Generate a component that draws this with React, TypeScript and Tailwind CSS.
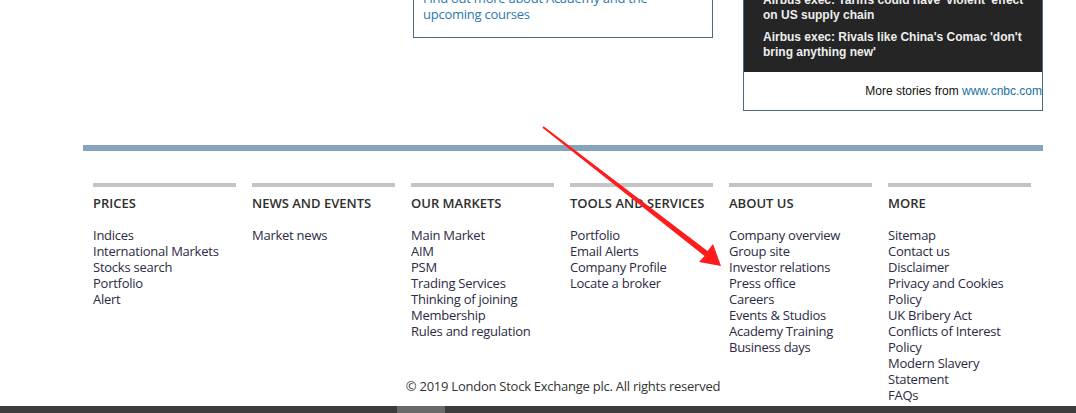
import React from "react";

const columns: { title: string; links: string[] }[] = [
  { title: "PRICES", links: ["Indices", "International Markets", "Stocks search", "Portfolio", "Alert"] },
  { title: "NEWS AND EVENTS", links: ["Market news"] },
  {
    title: "OUR MARKETS",
    links: ["Main Market", "AIM", "PSM", "Trading Services", "Thinking of joining", "Membership", "Rules and regulation"],
  },
  { title: "TOOLS AND SERVICES", links: ["Portfolio", "Email Alerts", "Company Profile", "Locate a broker"] },
  {
    title: "ABOUT US",
    links: [
      "Company overview",
      "Group site",
      "Investor relations",
      "Press office",
      "Careers",
      "Events & Studios",
      "Academy Training",
      "Business days",
    ],
  },
  {
    title: "MORE",
    links: [
      "Sitemap",
      "Contact us",
      "Disclaimer",
      "Privacy and Cookies Policy",
      "UK Bribery Act",
      "Conflicts of Interest Policy",
      "Modern Slavery Statement",
      "FAQs",
    ],
  },
];

export default function App() {
  return (
    <div className="relative w-[1076px] h-[413px] overflow-hidden bg-white flex flex-col">
      <div className="w-[960px] ml-[83px] flex flex-col">
        {/* top row */}
        <div className="mt-[-10px] flex items-start gap-[30px]">
          <div className="w-[300px]" />
          <div className="w-[300px] border border-t-0 border-[#4b6a88] pl-[9px] pb-[15px] text-[13px] leading-[16px] tracking-[-0.25px] text-[#2a77ad] font-['Open_Sans',sans-serif]">
            <div>Find out more about Academy and the</div>
            <div>upcoming courses</div>
          </div>
          <div className="w-[300px] border border-t-0 border-[#4b6a88] font-['Liberation_Sans',Arial,sans-serif]">
            <div className="bg-[#252525] pt-[3px] pl-[19px] pr-[6px] pb-[12px] text-[12px] leading-[15px] font-bold text-[#eeeeee]">
              <div>Airbus exec: Tariffs could have 'violent' effect on US supply chain</div>
              <div className="mt-[7px]">Airbus exec: Rivals like China's Comac 'don't bring anything new'</div>
            </div>
            <div className="h-[38px] flex items-center justify-end text-[12px] text-[#111]">
              <span>
                More stories from <span className="text-[#1a6fa3]">www.cnbc.com</span>
              </span>
            </div>
          </div>
        </div>

        {/* blue rule */}
        <div className="mt-[34px] h-[6px] bg-[#86a4be]" />

        {/* columns */}
        <div className="mt-[32px] pl-[10px] grid grid-cols-[repeat(6,143px)] gap-x-[16px] font-['Open_Sans',sans-serif]">
          {columns.map((c) => (
            <div key={c.title} className="flex flex-col">
              <div className="h-[4px] bg-[#c4c4c4]" />
              <div className="mt-[8px] text-[13px] leading-[16px] font-semibold text-[#2e2e2e]">{c.title}</div>
              <ul className="mt-[16px] text-[13px] leading-[16px] tracking-[-0.25px] text-[#2c2a44]">
                {c.links.map((l) => (
                  <li key={l}>{l}</li>
                ))}
              </ul>
            </div>
          ))}
        </div>

        <div className="mt-[-25px] text-center text-[13px] leading-[16px] tracking-[-0.25px] text-[#333] font-['Open_Sans',sans-serif]">
          © 2019 London Stock Exchange plc. All rights reserved
        </div>
      </div>

      {/* bottom scrollbar */}
      <div className="mt-auto h-[7px] bg-[#3c3c3c] flex">
        <div className="ml-[397px] w-[48px] bg-[#6a6a6a]" />
      </div>

      {/* red annotation arrow */}
      <svg className="absolute inset-0 pointer-events-none" width="1076" height="413" viewBox="0 0 1076 413">
        <polygon
          points="543.6,126.2 707.5,251 713,244 721,266 699,262 704.5,256 542.4,127.8"
          fill="#ff1c1c"
        />
      </svg>
    </div>
  );
}
